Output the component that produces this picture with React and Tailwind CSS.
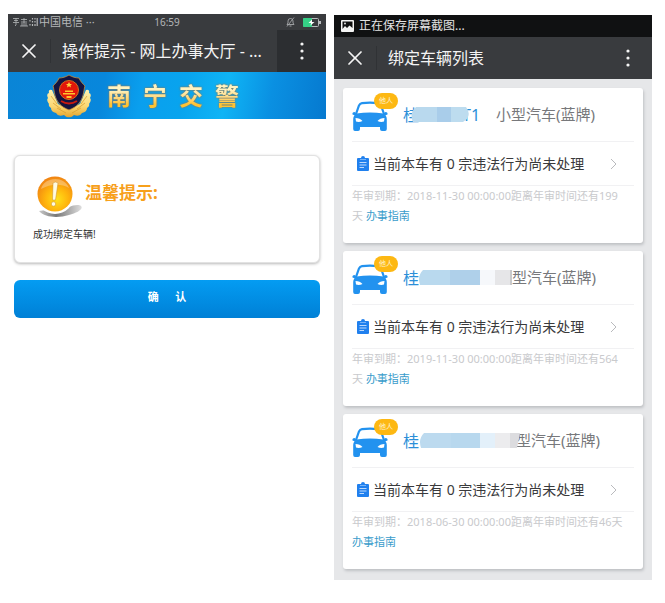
import { X } from 'lucide-react';

const vehicles = [
  {
    id: 1,
    plateEnd: 'T1',
    type: '小型汽车(蓝牌)',
    due: '2018-11-30 00:00:00',
    days: 199,
    mosaic: 'short',
  },
  {
    id: 2,
    plateEnd: '',
    type: '型汽车(蓝牌)',
    due: '2019-11-30 00:00:00',
    days: 564,
    mosaic: 'medium',
  },
  {
    id: 3,
    plateEnd: '',
    type: '型汽车(蓝牌)',
    due: '2018-06-30 00:00:00',
    days: 46,
    mosaic: 'long',
  },
];

function PoliceBadge() {
  return (
    <svg viewBox="0 0 44 44" className="h-11 w-11 shrink-0" aria-hidden="true">
      <defs>
        <linearGradient id="wheat" x1="0" y1="0" x2="0" y2="1">
          <stop offset="0" stopColor="#fff0b0" />
          <stop offset="0.6" stopColor="#fbd873" />
          <stop offset="1" stopColor="#e3a530" />
        </linearGradient>
      </defs>
      <path
        d="M5 16 Q1 15 2 19 Q-1 20 1 24 Q-1 26 2 30 Q1 32 4 34 Q4 38 9 39 Q11 43 17 41 Q20 44 22 43 Q24 44 27 41 Q33 43 35 39 Q40 38 40 34 Q43 32 42 30 Q45 26 43 24 Q45 20 42 19 Q43 15 39 16 L33 30 L22 35 L11 30 Z"
        fill="url(#wheat)"
      />
      <path d="M10 34 L19 39 M6 29 L14 35 M4 22 L10 30 M34 34 L25 39 M38 29 L30 35 M40 22 L34 30" stroke="#d99b2c" strokeWidth="0.7" fill="none" />
      <path
        d="M22 1 C19 3 15 4 12 4 C11 7 8 10 6 12 C8 17 6 30 22 36 C38 30 36 17 38 12 C36 10 33 7 32 4 C29 4 25 3 22 1 Z"
        fill="#15133f"
        stroke="#c98f3a"
        strokeWidth="0.8"
      />
      <circle cx="22" cy="16" r="9.500" fill="#e3170a" stroke="#d3701c" strokeWidth="1" />
      <path d="M22 8 l1 2 h2 l-1.600 1.400 .600 2 -2-1.200 -2 1.200 .600-2 -1.600-1.400 h2 Z" fill="#ffd23c" />
      <path d="M16 19 h12 v1.600 h-12 Z M18 16.500 h8 v1.400 h-8 Z M19.500 22 h5 v2 h-5 Z" fill="#ffc52e" />
      <path d="M14 27 Q22 32 30 27" stroke="#c9190f" strokeWidth="2" fill="none" />
    </svg>
  );
}

function AlertBall() {
  return (
    <svg viewBox="0 0 46 42" className="h-[42px] w-[46px] shrink-0" aria-hidden="true">
      <defs>
        <radialGradient id="ball" cx="0.55" cy="0.65" r="0.65">
          <stop offset="0" stopColor="#ffe21a" />
          <stop offset="0.5" stopColor="#ffb40c" />
          <stop offset="1" stopColor="#f08313" />
        </radialGradient>
        <linearGradient id="shade" x1="0" y1="0" x2="1" y2="0">
          <stop offset="0" stopColor="#c9c9c9" />
          <stop offset="0.4" stopColor="#777777" />
          <stop offset="1" stopColor="#dedede" />
        </linearGradient>
      </defs>
      <path d="M2 35 C8 42 22 42 32 39 C40 37 47 33 44 30 C42 28 36 29 32 31 Z" fill="url(#shade)" />
      <circle cx="18" cy="19" r="19" fill="#fff" />
      <circle cx="18" cy="18" r="17.500" fill="url(#ball)" />
      <path d="M4 13 C7 1 27 -1 32 12 C24 7 13 8 4 13 Z" fill="#fff" opacity="0.3" />
      <path d="M16 7 Q18.500 5 21 7 L18.500 24 H15.500 Z" fill="#fffbe0" stroke="#c98a2a" strokeWidth="0.5" />
      <circle cx="16.500" cy="28" r="2.200" fill="#fffbe0" stroke="#c98a2a" strokeWidth="0.5" />
    </svg>
  );
}

function CarIcon() {
  return (
    <svg viewBox="0 0 36 30" className="h-[30px] w-9" aria-hidden="true">
      <path d="M4 13 L7 4.500 Q8 2.500 10 2.200 Q18 1 26 2.200 Q28 2.500 29 4.500 L32 13" fill="none" stroke="#2292ef" strokeWidth="2.200" />
      <path
        d="M4.500 12.500 Q18 10.500 31.500 12.500 L33.500 11 Q36 11 35.500 13.500 L33.500 14.300 Q34.800 16 34.800 18 V28 Q34.800 30 33 30 H30 Q28 30 28 28 V26 H8 V28 Q8 30 6 30 H3 Q1.200 30 1.200 28 V18 Q1.200 16 2.500 14.300 L.500 13.500 Q0 11 2.500 11 Z"
        fill="#2292ef"
      />
      <path d="M3.500 17 Q8 17 10.500 20 Q7 21.500 4 20.500 Z M32.500 17 Q28 17 25.500 20 Q29 21.500 32 20.500 Z" fill="#fff" />
    </svg>
  );
}

function ClipboardIcon() {
  return (
    <svg viewBox="0 0 12 15" className="h-[15px] w-3 shrink-0" aria-hidden="true">
      <path d="M1 2 H4 Q4 0 6 0 Q8 0 8 2 H11 Q12 2 12 3 V14 Q12 15 11 15 H1 Q0 15 0 14 V3 Q0 2 1 2 Z" fill="#2080ee" />
      <path d="M3 3.500 H9" stroke="#8dc0fa" strokeWidth="0.8" />
      <path d="M2.500 6.500 H9.500 M2.500 9 H9.500 M2.500 11.500 H7" stroke="#e4f0ff" strokeWidth="0.8" />
    </svg>
  );
}

function Mosaic({ kind }) {
  if (kind === 'short') {
    return (
      <svg viewBox="0 0 59 15" className="relative -ml-2 h-[15px] w-[59px]" aria-hidden="true">
        <path d="M5 0 H34 V15 H2 Q-2 6 5 0 Z" fill="#b9d9ee" />
        <path d="M26 0 H40 V15 H26 Z" fill="#a9cdea" />
        <path d="M40 0 H55 Q60 6 56 12 L52 15 H40 Z" fill="#bddcef" />
      </svg>
    );
  }
  if (kind === 'medium') {
    return (
      <svg viewBox="0 0 94 15" className="relative -ml-px h-[15px] w-[94px]" aria-hidden="true">
        <path d="M5 0 H32 V15 H2 Q-1 6 5 0 Z" fill="#b9d9ee" />
        <path d="M32 0 H62 V15 H32 Z" fill="#afd0ea" />
        <path d="M62 0 H77 V15 H62 Z" fill="#f6f8fb" />
        <path d="M77 0 H92 V15 H77 Z" fill="#e6e6e8" />
        <path d="M92 0 H94 V15 H92 Z" fill="#c9c9cb" />
      </svg>
    );
  }
  return (
    <svg viewBox="0 0 101 15" className="relative -mr-1 h-[15px] w-[101px]" aria-hidden="true">
      <path d="M5 0 H32 V15 H2 Q-1 6 5 0 Z" fill="#bcdaef" />
      <path d="M32 0 H61 V15 H32 Z" fill="#b8d8ee" />
      <path d="M61 0 H76 V15 H61 Z" fill="#e3f0fa" />
      <path d="M76 0 H91 V15 H76 Z" fill="#ececee" />
      <path d="M91 0 H101 L98 15 H91 Z" fill="#dcdcdf" />
    </svg>
  );
}

function Dots() {
  return (
    <svg viewBox="0 0 4 18" className="h-[18px] w-1" fill="#f4f4f4" aria-hidden="true">
      <circle cx="2" cy="2" r="1.600" />
      <circle cx="2" cy="9" r="1.600" />
      <circle cx="2" cy="16" r="1.600" />
    </svg>
  );
}

function NavBar({ title, shaded }) {
  return (
    <header className="flex h-[42px] items-center bg-[#393b3e] text-[#f4f4f4]">
      <button aria-label="关闭" className="flex h-6 w-[43px] items-center justify-center border-r border-[#303235]">
        <X className="h-6 w-6" strokeWidth={1.75} />
      </button>
      <h1 className="min-w-0 flex-1 truncate pl-[11px] text-base">{title}</h1>
      <button
        aria-label="菜单"
        className={shaded ? 'flex h-full w-[49px] items-center justify-center bg-[#2c2e31]' : 'flex h-full w-[49px] items-center justify-center'}
      >
        <Dots />
      </button>
    </header>
  );
}

function TipScreen() {
  return (
    <section className="flex-1">
      <div className="grid h-4 grid-cols-3 items-center bg-[#393b3e] px-[5px] text-[10px] leading-4 text-[#b4b6b8]">
        <div className="flex items-center gap-px text-[11px] whitespace-nowrap">
          <svg viewBox="0 0 25 10" className="h-[10px] w-[25px]" fill="none" stroke="#b4b6b8" strokeWidth="0.8" aria-hidden="true">
            <path d="M0 1.500 H6 M1 3.500 H5 M3 1 V5 M0 5.500 H6 M3 5.500 V8 L2 9 M8 2.500 H14 M11 1 V4 M8 5 H14 M9 6 V9 M11 4 V9 M13 6 V9 M7 9 H15" />
            <path d="M17 3 V4.500 M17 7 V8.500 M19.500 1 V2.500 M19.500 4 V5.500 M19.500 7 V9 M22 1 V2.500 M22 4 V5.500 M22 7 V9 M24.200 1 V9" strokeWidth="1.200" />
          </svg>
          <span>中国电信 ···</span>
        </div>
        <span className="text-center">16:59</span>
        <div className="flex items-center justify-end gap-2">
          <svg viewBox="0 0 9 10" className="h-[10px] w-[9px]" fill="none" stroke="#a6a8aa" aria-hidden="true">
            <path d="M1 7.500 H8 L7 6 V4 Q7 1.500 4.500 1.500 Q2 1.500 2 4 V6 Z M3.500 9 H5.500 M8 .500 L1 9.500" strokeWidth="0.9" />
          </svg>
          <svg viewBox="0 0 18 9" className="h-[9px] w-[18px]" aria-hidden="true">
            <rect x="0.500" y="0.500" width="15" height="8" rx="1" fill="none" stroke="#b9bcbe" />
            <rect x="0" y="0" width="9" height="9" rx="1" fill="#35cf86" />
            <path d="M16 3 H18 V6 H16 Z" fill="#b9bcbe" />
            <path d="M9 1.500 L5.500 5 H8 L7.500 7.500 L11.500 4 H9 Z" fill="#fff" />
          </svg>
        </div>
      </div>
      <NavBar title="操作提示 - 网上办事大厅 - ..." shaded />
      <div className="flex h-[47px] items-center gap-4 bg-[linear-gradient(100deg,#0a85d6_0%,#0887dc_30%,#0a9fee_42%,#08a4ee_55%,#0fb4f5_68%,#0a90e2_82%,#0679cf_100%)] pl-[39px]">
        <PoliceBadge />
        <p className="bg-gradient-to-b from-[#fff3c0] from-30% to-[#ffc332] to-75% bg-clip-text text-2xl font-bold whitespace-nowrap text-transparent drop-shadow-[0_0_1px_#a5703d]">
          南&ensp;宁&ensp;交&ensp;警
        </p>
      </div>
      <main className="px-[6px] pt-9">
        <div className="h-[108px] rounded-md border border-[#e2e2e2] bg-white px-[18px] pt-5 shadow-[0_1px_3px_#b8b8b8]">
          <div className="flex items-start gap-[2px] pl-1">
            <AlertBall />
            <h2 className="pt-1 text-[17px] font-bold text-[#f7a01b]">温馨提示:</h2>
          </div>
          <p className="pt-2 text-[10px] leading-4 text-[#333]">成功绑定车辆!</p>
        </div>
        <button className="mt-[17px] h-[38px] w-full rounded-md bg-gradient-to-b from-[#049cf2] to-[#0080d6] pb-1 text-[11px] font-bold text-white">
          确&emsp;&ensp;认
        </button>
      </main>
    </section>
  );
}

function VehicleCard({ vehicle }) {
  return (
    <li className="rounded-[3px] bg-white px-[9px] pb-[17px] shadow-[1px_2px_3px_#bfc1c4]">
      <div className="flex h-[54px] items-center border-b border-[#f1f1f3]">
        <div className="relative w-[51px] shrink-0 pt-[2px]">
          <CarIcon />
          <span className="absolute -top-[6px] left-[22px] flex h-4 w-6 items-center justify-center rounded-full bg-[#fdb813] text-[7px] leading-none text-[#fff3d0]">
            他人
          </span>
        </div>
        <div className="flex items-center whitespace-nowrap">
          <span className="text-base text-[#2b8fd8]">桂</span>
          <Mosaic kind={vehicle.mosaic} />
          {vehicle.plateEnd && <span className="-ml-2 pr-4 text-base text-[#2b8fd8]">{vehicle.plateEnd}</span>}
          <span className="text-[15px] text-[#77787b]">{vehicle.type}</span>
        </div>
      </div>
      <a href="#violations" className="flex h-11 items-center border-b border-[#f1f1f3] pr-[17px] pl-[5px] text-sm text-[#3a3a3c]">
        <ClipboardIcon />
        <span className="flex-1 pl-1 whitespace-nowrap">当前本车有 0 宗违法行为尚未处理</span>
        <svg viewBox="0 0 7 12" className="h-3 w-[7px]" fill="none" stroke="#b9babd" aria-hidden="true">
          <path d="M1 1 L6 6 L1 11" />
        </svg>
      </a>
      <p className="pr-2 text-[11px] leading-5 text-[#c9cacd]">
        年审到期：{vehicle.due}距离年审时间还有{vehicle.days}天{' '}
        <a href="#guide" className="inline-block text-[#3a9ccb]">
          办事指南
        </a>
      </p>
    </li>
  );
}

function VehicleScreen() {
  return (
    <section className="mt-px flex-1 bg-[#e6e7e9]">
      <div className="flex h-[22px] items-center gap-[5px] bg-[#101112] px-[7px] text-xs text-[#e4e4e4]">
        <svg viewBox="0 0 13 12" className="h-3 w-[13px]" aria-hidden="true">
          <path d="M1 0 H12 Q13 0 13 1 V11 Q13 12 12 12 H1 Q0 12 0 11 V1 Q0 0 1 0 Z M1.500 1.500 V9 L4 6 L6 8 L8.500 5.500 L11.500 8 V1.500 Z" fill="#f4f4f4" fillRule="evenodd" />
          <circle cx="4" cy="3.500" r="0.900" fill="#f4f4f4" />
        </svg>
        <span>正在保存屏幕截图...</span>
      </div>
      <NavBar title="绑定车辆列表" />
      <ul className="flex flex-col gap-2 px-[9px] pt-[9px] pb-[11px]">
        {vehicles.map((vehicle) => (
          <VehicleCard key={vehicle.id} vehicle={vehicle} />
        ))}
      </ul>
    </section>
  );
}

export default function App() {
  return (
    <div className="flex min-h-screen items-start gap-2 bg-white pt-[14px] pr-[13px] pl-2 font-['Noto_Sans','Noto_Sans_CJK_SC',sans-serif]">
      <TipScreen />
      <VehicleScreen />
    </div>
  );
}
